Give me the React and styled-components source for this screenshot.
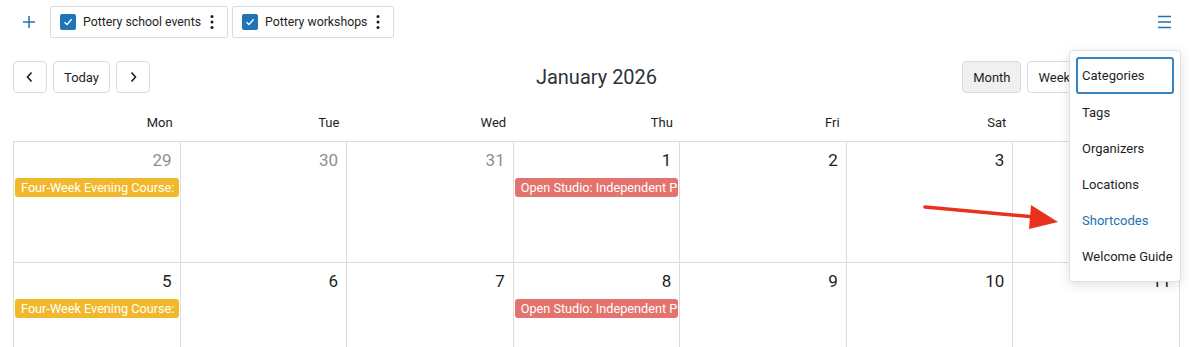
import React from 'react'
import styled, { createGlobalStyle } from 'styled-components'

const GlobalStyle = createGlobalStyle`
    body {
        margin: 0;
        background: #fff;
        font-family: Roboto, "Noto Sans", "Liberation Sans", sans-serif;
        color: #1e1e1e;
    }
`

const weeks = [
    [
        { n: 29, muted: true, ev: 'yellow' },
        { n: 30, muted: true },
        { n: 31, muted: true },
        { n: 1, ev: 'red' },
        { n: 2 },
        { n: 3 },
        { n: 4 },
    ],
    [
        { n: 5, ev: 'yellow' },
        { n: 6 },
        { n: 7 },
        { n: 8, ev: 'red' },
        { n: 9 },
        { n: 10 },
        { n: 11 },
    ],
]

const events = {
    yellow: 'Four-Week Evening Course:',
    red: 'Open Studio: Independent P',
}

const menu = ['Categories', 'Tags', 'Organizers', 'Locations', 'Shortcodes', 'Welcome Guide']

function Check() {
    return (
        <CheckBox>
            <svg width="12" height="12" viewBox="0 0 12 12">
                <path d="M2.5 6.3 L5 8.6 L9.6 3.2" fill="none" stroke="#fff" strokeWidth="1.4" />
            </svg>
        </CheckBox>
    )
}

function Dots() {
    return (
        <svg width="4" height="16" viewBox="0 0 4 16">
            <circle cx="2" cy="2.5" r="1.5" fill="#1e1e1e" />
            <circle cx="2" cy="8" r="1.5" fill="#1e1e1e" />
            <circle cx="2" cy="13.5" r="1.5" fill="#1e1e1e" />
        </svg>
    )
}

function App() {
    return (
        <Page>
            <GlobalStyle />
            <TopBar>
                <PlusButton>
                    <svg width="14" height="14" viewBox="0 0 14 14">
                        <path d="M7 1 V13 M1 7 H13" stroke="#2271b1" strokeWidth="1.5" />
                    </svg>
                </PlusButton>
                <Chip>
                    <Check />
                    <ChipLabel>Pottery school events</ChipLabel>
                    <Dots />
                </Chip>
                <Chip>
                    <Check />
                    <ChipLabel>Pottery workshops</ChipLabel>
                    <Dots />
                </Chip>
                <MenuButton>
                    <svg width="15" height="14" viewBox="0 0 15 14">
                        <path d="M1 1.5 H14 M1 7 H14 M1 12.5 H14" stroke="#2271b1" strokeWidth="1.4" />
                    </svg>
                </MenuButton>
            </TopBar>

            <NavBar>
                <NavGroup>
                    <IconButton>
                        <svg width="10" height="12" viewBox="0 0 10 12">
                            <path d="M6.5 1.5 L2.5 6 L6.5 10.5" fill="none" stroke="#1e1e1e" strokeWidth="1.6" />
                        </svg>
                    </IconButton>
                    <NavButton>Today</NavButton>
                    <IconButton>
                        <svg width="10" height="12" viewBox="0 0 10 12">
                            <path d="M3.5 1.5 L7.5 6 L3.5 10.5" fill="none" stroke="#1e1e1e" strokeWidth="1.6" />
                        </svg>
                    </IconButton>
                </NavGroup>
                <Title>January 2026</Title>
                <ViewGroup>
                    <NavButton $active>Month</NavButton>
                    <NavButton>Week</NavButton>
                    <NavButton>Day</NavButton>
                    <NavButton>List</NavButton>
                </ViewGroup>
            </NavBar>

            <Calendar>
                <DayNames>
                    {['Mon', 'Tue', 'Wed', 'Thu', 'Fri', 'Sat', 'Sun'].map((d) => (
                        <DayName key={d}>{d}</DayName>
                    ))}
                </DayNames>
                <Grid>
                    {weeks.flat().map((c, i) => (
                        <Cell key={i}>
                            <DayNum $muted={c.muted}>{c.n}</DayNum>
                            {c.ev && <Event $kind={c.ev}>{events[c.ev]}</Event>}
                        </Cell>
                    ))}
                </Grid>
            </Calendar>

            <Dropdown>
                {menu.map((m, i) => (
                    <MenuItem key={m} $focused={i === 0} $highlight={m === 'Shortcodes'}>
                        {m}
                    </MenuItem>
                ))}
            </Dropdown>

            <Arrow width="140" height="30" viewBox="0 0 140 30">
                <path d="M2 6 L112 16" stroke="#e8321e" strokeWidth="3.6" strokeLinecap="round" />
                <polygon points="108,4 135,21 106,28" fill="#e8321e" />
            </Arrow>
        </Page>
    )
}

export default App

const Page = styled.div`
    position: relative;
    width: 1200px;
    height: 347px;
    overflow: hidden;
`

const TopBar = styled.div`
    display: flex;
    align-items: center;
    height: 32px;
    padding: 6px 20px 0 20px;
    gap: 4px;
`

const PlusButton = styled.div`
    width: 18px;
    height: 32px;
    display: flex;
    align-items: center;
    justify-content: center;
    margin-right: 8px;
`

const Chip = styled.div`
    display: flex;
    align-items: center;
    height: 30px;
    padding: 0 13px 0 9px;
    border: 1px solid #dcdcde;
    border-radius: 2px;
    font-size: 12.3px;
    gap: 7px;
`

const CheckBox = styled.div`
    width: 16px;
    height: 16px;
    border-radius: 2px;
    background: #1e74b9;
    display: flex;
    align-items: center;
    justify-content: center;
`

const ChipLabel = styled.span`
    margin-right: 2px;
    color: #1e1e1e;
`

const MenuButton = styled.div`
    margin-left: auto;
    display: flex;
    align-items: center;
    height: 32px;
    margin-right: 8px;
`

const NavBar = styled.div`
    display: grid;
    grid-template-columns: 1fr auto 1fr;
    align-items: center;
    margin: 23px 20px 0 13px;
    height: 32px;
`

const NavGroup = styled.div`
    display: flex;
    gap: 6px;
`

const ViewGroup = styled.div`
    display: flex;
    gap: 6px;
    justify-content: flex-end;
`

const NavButton = styled.button`
    height: 32px;
    padding: 0 10px;
    border: 1px solid #dcdcde;
    border-radius: 4px;
    background: ${(p) => (p.$active ? '#f0f0f1' : '#fff')};
    font-family: inherit;
    font-size: 13px;
    color: #1e1e1e;
    display: flex;
    align-items: center;
    justify-content: center;
`

const IconButton = styled(NavButton)`
    width: 34px;
    padding: 0;
`

const Title = styled.h2`
    margin: 0;
    font-size: 20px;
    font-weight: 400;
    color: #2c3338;
`

const Calendar = styled.div`
    margin: 0 20px 0 13px;
`

const DayNames = styled.div`
    display: grid;
    grid-template-columns: repeat(7, 1fr);
    height: 48px;
    align-items: center;
    padding-top: 10px;
    box-sizing: border-box;
`

const DayName = styled.div`
    text-align: right;
    padding-right: 7px;
    font-size: 13px;
    color: #1e1e1e;
`

const Grid = styled.div`
    display: grid;
    grid-template-columns: repeat(7, 1fr);
    grid-auto-rows: 121px;
    border-top: 1px solid #dcdcde;
    border-left: 1px solid #dcdcde;
`

const Cell = styled.div`
    border-right: 1px solid #dcdcde;
    border-bottom: 1px solid #dcdcde;
    display: flex;
    flex-direction: column;
    align-items: stretch;
`

const DayNum = styled.div`
    text-align: right;
    padding: 8px 8px 0 0;
    height: 28px;
    font-size: 17px;
    line-height: 20px;
    color: ${(p) => (p.$muted ? '#8c8f94' : '#1e1e1e')};
`

const Event = styled.div`
    margin: 0 1px;
    height: 19px;
    line-height: 19px;
    border-radius: 3px;
    padding-left: 6px;
    font-size: 12.7px;
    color: #fff;
    white-space: nowrap;
    overflow: hidden;
    background: ${(p) => (p.$kind === 'yellow' ? '#f2b82c' : '#e4736d')};
`

const Dropdown = styled.div`
    position: absolute;
    left: 1069px;
    top: 50px;
    width: 98px;
    padding: 6px 6px 7px 6px;
    background: #fff;
    border: 1px solid #e0e0e0;
    border-radius: 4px;
    box-shadow: 0 3px 12px rgba(0, 0, 0, 0.12);
    display: flex;
    flex-direction: column;
`

const MenuItem = styled.div`
    height: ${(p) => (p.$focused ? '37px' : '36px')};
    display: flex;
    align-items: center;
    padding-left: ${(p) => (p.$focused ? '4px' : '6px')};
    font-size: 13px;
    white-space: nowrap;
    color: ${(p) => (p.$highlight ? '#2271b1' : '#1e1e1e')};
    border: ${(p) => (p.$focused ? '2px solid #3582c4' : 'none')};
    border-radius: 3px;
    box-sizing: border-box;
`

const Arrow = styled.svg`
    position: absolute;
    left: 923px;
    top: 201px;
`
